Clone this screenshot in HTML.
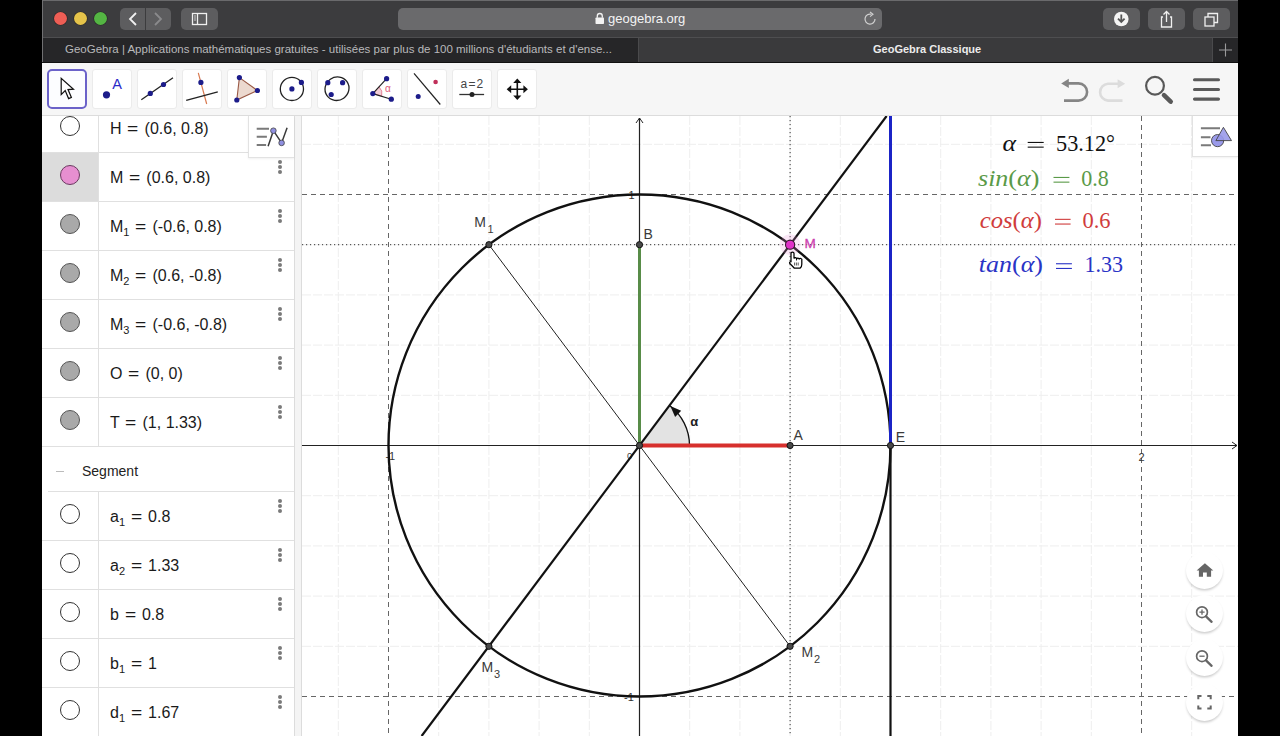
<!DOCTYPE html>
<html><head><meta charset="utf-8">
<style>
*{margin:0;padding:0;box-sizing:border-box}
html,body{width:1280px;height:736px;overflow:hidden;background:#000;font-family:"Liberation Sans",sans-serif}
#win{position:absolute;left:42px;top:0;width:1196px;height:736px;background:#fff;overflow:hidden}
#title{position:absolute;left:0;top:0;width:1196px;height:37px;background:#3c3c3e;border-top:1px solid #6a6a6c}
.tl{position:absolute;top:11px;width:13px;height:13px;border-radius:50%;box-shadow:0 0 0 0.6px rgba(0,0,0,.35)}
.btn{position:absolute;top:7px;height:22px;background:#5d5d5f;border-radius:5px}
.btn svg{position:absolute;left:0;top:0}
#tabs{position:absolute;left:0;top:37px;width:1196px;height:26px;background:#262628;border-top:1px solid #4e4e50;border-bottom:1px solid #111}
#toolbar{position:absolute;left:0;top:63px;width:1196px;height:53px;background:#f6f6f6;border-bottom:1px solid #dcdcdc}
.tool{position:absolute;top:6px;width:40px;height:40px;background:#fff;border:1px solid #ebebeb;border-radius:3px}
.tool.sel{border:2px solid #6b62c9;border-radius:5px;background:#fcfdff}
.tool svg{position:absolute;left:-1px;top:-1px}
.tool.sel svg{left:-2px;top:-2px}
#alg{position:absolute;left:0;top:116px;width:253px;height:620px;background:#fff;overflow:hidden}
.row{position:absolute;left:0;width:253px;height:49px;border-bottom:1px solid #e0e0e0}
.row .lc{position:absolute;left:0;top:0;width:57px;height:48px;border-right:1px solid #e0e0e0}
.dot{position:absolute;left:18px;top:11.5px;width:20px;height:20px;border-radius:50%;border:1.5px solid #333;background:#fff}
.dot.g{background:#a9a9a9;border-color:#555}
.dot.pk{background:#e68fd0;border-color:#6a3a60}
.row .tx{position:absolute;left:68px;top:14.5px;font-size:16px;color:#1a1a1a;white-space:nowrap;line-height:20px}
.row .mn{position:absolute;left:236px;top:7px;width:4px}
.mn i{display:block;width:4px;height:4px;border-radius:50%;background:#7a7a7a;margin-bottom:1px}
.q{display:inline-block;margin:0 2.4px;transform:scaleX(1.2)}
sub{font-size:11px;vertical-align:-4px;line-height:0}
#split{position:absolute;left:252px;top:116px;width:8px;height:620px;background:#f4f4f4;border-left:1px solid #dcdcdc;border-right:1px solid #dcdcdc}
#gfx{position:absolute;left:0;top:0}
.fab{position:absolute;left:1185px;width:37px;height:37px;border-radius:50%;background:#fff;box-shadow:0 2px 2.5px -0.5px rgba(0,0,0,.2)}
.fab svg{position:absolute;left:0;top:0}
.tabtxt{position:absolute;top:4px;font-size:11.5px;color:#b9b9bb;white-space:nowrap;line-height:14px}
</style></head><body>
<div id="win">
 <div id="title">
  <div class="tl" style="left:12px;background:#ee5e55"></div>
  <div class="tl" style="left:32px;background:#e5c34a"></div>
  <div class="tl" style="left:52px;background:#54b543"></div>
  <div class="btn" style="left:78px;width:25px;border-radius:5px 0 0 5px"><svg width="25" height="22"><path d="M16,5 L10,11 L16,17" fill="none" stroke="#f0f0f0" stroke-width="1.8"/></svg></div>
  <div class="btn" style="left:104px;width:25px;border-radius:0 5px 5px 0"><svg width="25" height="22"><path d="M9,5 L15,11 L9,17" fill="none" stroke="#8a8a8c" stroke-width="1.8"/></svg></div>
  <div class="btn" style="left:139px;width:37px"><svg width="37" height="22"><rect x="11.5" y="5.5" width="14" height="11" fill="none" stroke="#f0f0f0" stroke-width="1.3"/><line x1="16.5" y1="5.5" x2="16.5" y2="16.5" stroke="#f0f0f0" stroke-width="1.3"/><path d="M13,8 H15 M13,10 H15 M13,12 H15" stroke="#ddd" stroke-width="0.9"/></svg></div>
  <div class="btn" style="left:356px;width:484px;background:#6a6a6c"><svg width="484" height="22"><rect x="197.5" y="9.5" width="8.5" height="6.5" rx="0.8" fill="#f2f2f2"/><path d="M199.3,9.8 V8 A2.5,2.5 0 0 1 204.3,8 V9.8" fill="none" stroke="#f2f2f2" stroke-width="1.3"/><path d="M477,11 A5,5 0 1 1 473.5,6.3" fill="none" stroke="#d0d0d0" stroke-width="1.2"/><path d="M472,4 L475,6.3 L472,8.6" fill="none" stroke="#d0d0d0" stroke-width="1.1"/></svg><div style="position:absolute;left:210px;top:3px;font-size:13px;color:#f4f4f4;line-height:16px">geogebra.org</div></div>
  <div class="btn" style="left:1061px;width:37px"><svg width="37" height="22"><circle cx="18.3" cy="11" r="7.3" fill="#f4f4f4"/><path d="M18.3,6.5 V13.5 M15,10.7 L18.3,14 L21.6,10.7" fill="none" stroke="#555" stroke-width="1.8"/></svg></div>
  <div class="btn" style="left:1106px;width:37px"><svg width="37" height="22"><path d="M15,9 H13.5 V19 H23.5 V9 H22" fill="none" stroke="#f0f0f0" stroke-width="1.3"/><path d="M18.5,14 V3.5 M15.5,6.5 L18.5,3.5 L21.5,6.5" fill="none" stroke="#f0f0f0" stroke-width="1.3"/></svg></div>
  <div class="btn" style="left:1151px;width:37px"><svg width="37" height="22"><rect x="12" y="9" width="9" height="9" fill="none" stroke="#f0f0f0" stroke-width="1.3"/><path d="M15,9 V5.5 H24.5 V14.5 H21" fill="none" stroke="#f0f0f0" stroke-width="1.3"/></svg></div>
 </div>
 <div id="tabs"><div style="position:absolute;left:0;top:-38px;width:1px;height:62px;background:#707072"></div>
  <div style="position:absolute;left:596px;top:0;width:1px;height:24px;background:#4a4a4c"></div>
  <div style="position:absolute;left:597px;top:0;width:574px;height:24px;background:#3a3a3c"></div>
  <div style="position:absolute;left:1170px;top:0;width:1px;height:24px;background:#4a4a4c"></div>
  <div class="tabtxt" style="left:23px">GeoGebra | Applications mathématiques gratuites - utilisées par plus de 100 millions d'étudiants et d'ense...</div>
  <div class="tabtxt" style="left:831px;color:#ececec;font-weight:bold;font-size:11px">GeoGebra Classique</div>
  <svg style="position:absolute;left:1171px;top:0" width="25" height="24"><path d="M12.5,5.5 V18.5 M6,12 H19" stroke="#9a9a9c" stroke-width="1.1"/></svg>
 </div>
 <div id="toolbar">
<div class="tool sel" style="left:5px"><svg width="40" height="40" viewBox="0 0 40 40"><path d="M14.2,9.3 L14.2,25.6 L18.2,21.6 L21.6,29.6 L24.4,28.4 L21,20.6 L26.5,20.2 Z" fill="#fff" stroke="#111" stroke-width="1.2" stroke-linejoin="miter"/></svg></div>
<div class="tool" style="left:50px"><svg width="40" height="40" viewBox="0 0 40 40"><circle cx="14.5" cy="25.8" r="3.6" fill="#1c1c8a"/><text x="20.2" y="19.9" font-family="Liberation Sans" font-size="14.5" fill="#2a2ac8">A</text></svg></div>
<div class="tool" style="left:95px"><svg width="40" height="40" viewBox="0 0 40 40"><line x1="4.3" y1="30.8" x2="36" y2="8.8" stroke="#222" stroke-width="1.3"/><circle cx="13.3" cy="24.4" r="2.6" fill="#1c1c8a"/><circle cx="26.5" cy="15.5" r="2.6" fill="#1c1c8a"/></svg></div>
<div class="tool" style="left:140px"><svg width="40" height="40" viewBox="0 0 40 40"><line x1="16.3" y1="3.9" x2="24.7" y2="35" stroke="#d97a50" stroke-width="1.2"/><line x1="4.2" y1="31.3" x2="35.8" y2="22.8" stroke="#222" stroke-width="1.3"/><circle cx="18.9" cy="13.4" r="2.6" fill="#1c1c8a"/></svg></div>
<div class="tool" style="left:185px"><svg width="40" height="40" viewBox="0 0 40 40"><path d="M12.4,8.6 L30.4,21.5 L9.8,31 Z" fill="#ecd9cf" stroke="#9a5a46" stroke-width="1.1"/><circle cx="12.4" cy="8.6" r="2.6" fill="#1c1c8a"/><circle cx="30.4" cy="21.5" r="2.6" fill="#1c1c8a"/><circle cx="9.8" cy="31" r="2.6" fill="#1c1c8a"/></svg></div>
<div class="tool" style="left:230px"><svg width="40" height="40" viewBox="0 0 40 40"><circle cx="19.9" cy="19.9" r="11.6" fill="none" stroke="#222" stroke-width="1.3"/><circle cx="19.9" cy="19.9" r="2.6" fill="#1c1c8a"/><circle cx="29.4" cy="13.4" r="2.6" fill="#1c1c8a"/></svg></div>
<div class="tool" style="left:275px"><svg width="40" height="40" viewBox="0 0 40 40"><ellipse cx="20" cy="19.7" rx="12.2" ry="11.6" transform="rotate(-35 20 19.7)" fill="none" stroke="#222" stroke-width="1.3"/><circle cx="10.8" cy="13.7" r="2.6" fill="#1c1c8a"/><circle cx="25.6" cy="13.7" r="2.6" fill="#1c1c8a"/><circle cx="14.2" cy="25.5" r="2.6" fill="#1c1c8a"/></svg></div>
<div class="tool" style="left:320px"><svg width="40" height="40" viewBox="0 0 40 40"><path d="M10.8,24.6 L17,17.9 A9,9 0 0 1 19.7,27 Z" fill="#f3cfd6" stroke="#e0708a" stroke-width="0.8"/><line x1="10.8" y1="24.6" x2="24.6" y2="9.7" stroke="#222" stroke-width="1.2"/><line x1="10.8" y1="24.6" x2="29.3" y2="30.2" stroke="#222" stroke-width="1.2"/><circle cx="10.8" cy="24.6" r="2.6" fill="#1c1c8a"/><circle cx="24.6" cy="9.7" r="2.6" fill="#1c1c8a"/><circle cx="29.3" cy="30.2" r="2.6" fill="#1c1c8a"/><text x="23" y="23" font-family="Liberation Sans" font-size="10" fill="#e05a78">α</text></svg></div>
<div class="tool" style="left:365px"><svg width="40" height="40" viewBox="0 0 40 40"><line x1="7" y1="4.4" x2="33.3" y2="35.5" stroke="#222" stroke-width="1.2"/><circle cx="28.6" cy="13" r="2.3" fill="#c0305a"/><circle cx="11.2" cy="27.6" r="2.5" fill="#1c1c8a"/></svg></div>
<div class="tool" style="left:410px"><svg width="40" height="40" viewBox="0 0 40 40"><text x="8.6" y="18.6" font-family="Liberation Sans" font-size="12" fill="#444">a</text><text x="16.4" y="18.6" font-family="Liberation Sans" font-size="12" fill="#444">=</text><text x="24.6" y="18.6" font-family="Liberation Sans" font-size="12" fill="#444">2</text><line x1="7.3" y1="25.5" x2="32.1" y2="25.5" stroke="#333" stroke-width="1.3"/><circle cx="20" cy="25.5" r="2.5" fill="#222"/></svg></div>
<div class="tool" style="left:455px"><svg width="40" height="40" viewBox="0 0 40 40"><path d="M20.3,12 V28.4 M12,20.2 H28.6" stroke="#111" stroke-width="1.6"/><path d="M20.3,9.5 L16.2,14 H24.4 Z M20.3,31 L16.2,26.4 H24.4 Z M9.7,20.2 L14.2,16.2 V24.2 Z M30.9,20.2 L26.4,16.2 V24.2 Z" fill="#111"/></svg></div>
  <svg style="position:absolute;left:1000px;top:0" width="196" height="52">
   <path d="M26,20.4 H36.5 A8.6,8.6 0 0 1 36.5,37.6 H22" fill="none" stroke="#858585" stroke-width="2.6"/>
   <path d="M19.2,20.4 L26.8,15.8 V25 Z" fill="#858585"/>
   <path d="M76.3,20.75 H65.9 A8.45,8.45 0 0 0 65.9,37.6 H80.5" fill="none" stroke="#dcdcdc" stroke-width="2.6"/>
   <path d="M83.2,20.75 L75.6,16.2 V25.3 Z" fill="#dcdcdc"/>
   <circle cx="113" cy="22.8" r="8.9" fill="none" stroke="#585858" stroke-width="2.2"/>
   <path d="M122,32.2 L128.7,38.6" stroke="#585858" stroke-width="4.6" stroke-linecap="round"/>
   <path d="M152.5,16.7 H176.5 M152.5,26.5 H176.5 M152.5,36.1 H176.5" stroke="#5a5a5a" stroke-width="3.1" stroke-linecap="round"/>
  </svg>
 </div>
</div>
<svg id="gfx" width="1280" height="736" viewBox="0 0 1280 736">
<defs><clipPath id="gc"><rect x="302" y="116" width="936" height="620"/></clipPath></defs>
<g clip-path="url(#gc)">
<line x1="338.3" y1="116" x2="338.3" y2="736" stroke="#eeeeee" stroke-width="1" stroke-dasharray="9,2"/>
<line x1="438.7" y1="116" x2="438.7" y2="736" stroke="#eeeeee" stroke-width="1" stroke-dasharray="9,2"/>
<line x1="488.9" y1="116" x2="488.9" y2="736" stroke="#eeeeee" stroke-width="1" stroke-dasharray="9,2"/>
<line x1="539.1" y1="116" x2="539.1" y2="736" stroke="#eeeeee" stroke-width="1" stroke-dasharray="9,2"/>
<line x1="589.3" y1="116" x2="589.3" y2="736" stroke="#eeeeee" stroke-width="1" stroke-dasharray="9,2"/>
<line x1="689.7" y1="116" x2="689.7" y2="736" stroke="#eeeeee" stroke-width="1" stroke-dasharray="9,2"/>
<line x1="739.9" y1="116" x2="739.9" y2="736" stroke="#eeeeee" stroke-width="1" stroke-dasharray="9,2"/>
<line x1="790.1" y1="116" x2="790.1" y2="736" stroke="#eeeeee" stroke-width="1" stroke-dasharray="9,2"/>
<line x1="840.3" y1="116" x2="840.3" y2="736" stroke="#eeeeee" stroke-width="1" stroke-dasharray="9,2"/>
<line x1="940.7" y1="116" x2="940.7" y2="736" stroke="#eeeeee" stroke-width="1" stroke-dasharray="9,2"/>
<line x1="990.9" y1="116" x2="990.9" y2="736" stroke="#eeeeee" stroke-width="1" stroke-dasharray="9,2"/>
<line x1="1041.1" y1="116" x2="1041.1" y2="736" stroke="#eeeeee" stroke-width="1" stroke-dasharray="9,2"/>
<line x1="1091.3" y1="116" x2="1091.3" y2="736" stroke="#eeeeee" stroke-width="1" stroke-dasharray="9,2"/>
<line x1="1191.7" y1="116" x2="1191.7" y2="736" stroke="#eeeeee" stroke-width="1" stroke-dasharray="9,2"/>
<line x1="302" y1="144.3" x2="1238" y2="144.3" stroke="#eeeeee" stroke-width="1" stroke-dasharray="9,2"/>
<line x1="302" y1="244.7" x2="1238" y2="244.7" stroke="#eeeeee" stroke-width="1" stroke-dasharray="9,2"/>
<line x1="302" y1="294.9" x2="1238" y2="294.9" stroke="#eeeeee" stroke-width="1" stroke-dasharray="9,2"/>
<line x1="302" y1="345.1" x2="1238" y2="345.1" stroke="#eeeeee" stroke-width="1" stroke-dasharray="9,2"/>
<line x1="302" y1="395.3" x2="1238" y2="395.3" stroke="#eeeeee" stroke-width="1" stroke-dasharray="9,2"/>
<line x1="302" y1="495.7" x2="1238" y2="495.7" stroke="#eeeeee" stroke-width="1" stroke-dasharray="9,2"/>
<line x1="302" y1="545.9" x2="1238" y2="545.9" stroke="#eeeeee" stroke-width="1" stroke-dasharray="9,2"/>
<line x1="302" y1="596.1" x2="1238" y2="596.1" stroke="#eeeeee" stroke-width="1" stroke-dasharray="9,2"/>
<line x1="302" y1="646.3" x2="1238" y2="646.3" stroke="#eeeeee" stroke-width="1" stroke-dasharray="9,2"/>
<line x1="388.5" y1="116" x2="388.5" y2="736" stroke="#666" stroke-width="1" stroke-dasharray="5,4"/>
<line x1="890.5" y1="116" x2="890.5" y2="736" stroke="#666" stroke-width="1" stroke-dasharray="5,4"/>
<line x1="1141.5" y1="116" x2="1141.5" y2="736" stroke="#666" stroke-width="1" stroke-dasharray="5,4"/>
<line x1="302" y1="194.5" x2="1238" y2="194.5" stroke="#666" stroke-width="1" stroke-dasharray="5,4"/>
<line x1="302" y1="696.5" x2="1238" y2="696.5" stroke="#666" stroke-width="1" stroke-dasharray="5,4"/>
<line x1="302" y1="244.7" x2="1238" y2="244.7" stroke="#333" stroke-width="1" stroke-dasharray="1.2,2.8"/>
<line x1="790.1" y1="116" x2="790.1" y2="736" stroke="#333" stroke-width="1" stroke-dasharray="1.2,2.8"/>
<line x1="302" y1="445.5" x2="1237" y2="445.5" stroke="#222" stroke-width="1.2"/>
<path d="M1232,442.0 L1237,445.5 L1232,449.0" fill="none" stroke="#222" stroke-width="1"/>
<line x1="639.5" y1="736" x2="639.5" y2="118" stroke="#222" stroke-width="1.2"/>
<path d="M636.0,123 L639.5,118 L643.0,123" fill="none" stroke="#222" stroke-width="1"/>
<text x="390.3" y="459.7" font-family="Liberation Sans" font-size="11" fill="#333" text-anchor="middle">-1</text>
<text x="627.0" y="459.0" font-family="Liberation Sans" font-size="9.5" fill="#444">0</text>
<text x="1141.5" y="460.5" font-family="Liberation Sans" font-size="11" fill="#333" text-anchor="middle">2</text>
<text x="628.5" y="198.5" font-family="Liberation Sans" font-size="11" fill="#333">1</text>
<text x="624.0" y="700.5" font-family="Liberation Sans" font-size="11" fill="#333">-1</text>
<path d="M639.5,445.5 L689.5,445.5 A50,50 0 0 0 669.5,405.5 Z" fill="#e3e3e3" stroke="none"/>
<path d="M689.5,445.5 A50,50 0 0 0 669.5,405.5" fill="none" stroke="#111" stroke-width="1.3"/>
<path d="M670.3,406.1 L681.2,410.7 L675.1,416.9 Z" fill="#111"/>
<text x="690.3" y="425.5" font-family="Liberation Sans" font-size="13" font-weight="bold" fill="#222">α</text>
<circle cx="639.5" cy="445.5" r="251.0" fill="none" stroke="#111" stroke-width="2.4"/>
<line x1="488.9" y1="244.7" x2="790.1" y2="646.3" stroke="#222" stroke-width="1"/>
<line x1="421.6" y1="736" x2="886.6" y2="116" stroke="#111" stroke-width="2.2"/>
<line x1="890.5" y1="445.5" x2="890.5" y2="736" stroke="#111" stroke-width="2.2"/>
<line x1="890.5" y1="445.5" x2="890.5" y2="116" stroke="#1b24c6" stroke-width="3"/>
<line x1="639.5" y1="445.5" x2="639.5" y2="244.7" stroke="#588c48" stroke-width="3"/>
<line x1="639.5" y1="445.5" x2="790.1" y2="445.5" stroke="#d7302d" stroke-width="4"/>
<circle cx="639.5" cy="445.5" r="3.1" fill="#4a4a4a" stroke="#111" stroke-width="1"/>
<circle cx="790.1" cy="445.5" r="3.1" fill="#4a4a4a" stroke="#111" stroke-width="1"/>
<circle cx="890.5" cy="445.5" r="3.1" fill="#4a4a4a" stroke="#111" stroke-width="1"/>
<circle cx="639.5" cy="244.7" r="3.1" fill="#4a4a4a" stroke="#111" stroke-width="1"/>
<circle cx="488.9" cy="244.7" r="3.1" fill="#4a4a4a" stroke="#111" stroke-width="1"/>
<circle cx="790.1" cy="646.3" r="3.1" fill="#4a4a4a" stroke="#111" stroke-width="1"/>
<circle cx="488.9" cy="646.3" r="3.1" fill="#4a4a4a" stroke="#111" stroke-width="1"/>
<circle cx="790.1" cy="244.7" r="10.5" fill="#e890d8" fill-opacity="0.22"/>
<circle cx="790.1" cy="244.7" r="4.6" fill="#e030c8" stroke="#3a1030" stroke-width="1.1"/>
<text x="643.6" y="239" font-family="Liberation Sans" font-size="14" fill="#3a3a3a">B</text>
<text x="793.6" y="440" font-family="Liberation Sans" font-size="14" fill="#3a3a3a">A</text>
<text x="895.7" y="442" font-family="Liberation Sans" font-size="14" fill="#3a3a3a">E</text>
<text x="474.3" y="227" font-family="Liberation Sans" font-size="14" fill="#3a3a3a">M</text><text x="487.5" y="232.8" font-family="Liberation Sans" font-size="11" fill="#3a3a3a">1</text>
<text x="801.5" y="657" font-family="Liberation Sans" font-size="14" fill="#3a3a3a">M</text><text x="814" y="663" font-family="Liberation Sans" font-size="11" fill="#3a3a3a">2</text>
<text x="481.5" y="672" font-family="Liberation Sans" font-size="14" fill="#3a3a3a">M</text><text x="494" y="677.6" font-family="Liberation Sans" font-size="11" fill="#3a3a3a">3</text>
<text x="804.5" y="247.5" font-family="Liberation Sans" font-size="13.5" fill="#cc3fb0" stroke="#cc3fb0" stroke-width="0.3">M</text>
<g transform="translate(786,251)"><path d="M5,9.5 V2.6 A1.5,1.5 0 0 1 8,2.6 V7.6 A1.35,1.35 0 0 1 10.6,7.9 A1.35,1.35 0 0 1 13.2,8.4 A1.35,1.35 0 0 1 15.8,9.2 V13.2 Q15.8,15.6 14.2,17 H8.2 L3.6,12.2 A1.3,1.3 0 0 1 5,10.6 Z" fill="#fff" stroke="#000" stroke-width="1.25"/><path d="M10.4,11.5 V14.5 M12.2,11.5 V14.5 M8.6,11.5 V14.5" stroke="#111" stroke-width="0.7"/></g>
<text x="1002.5" y="150.6" font-family="Liberation Serif" font-size="22.5" fill="#111" textLength="13.5" lengthAdjust="spacingAndGlyphs"><tspan font-style="italic">α</tspan></text>
<rect x="1027.7" y="141.9" width="16.0" height="1.1" fill="#111"/><rect x="1027.7" y="146.6" width="16.0" height="1.1" fill="#111"/>
<text x="1056" y="150.6" font-family="Liberation Serif" font-size="22.5" fill="#111" textLength="59" lengthAdjust="spacingAndGlyphs">53.12°</text>
<text x="978" y="185.6" font-family="Liberation Serif" font-size="22.5" fill="#5a9a48" textLength="61.4" lengthAdjust="spacingAndGlyphs"><tspan font-style="italic">sin</tspan>(<tspan font-style="italic">α</tspan>)</text>
<rect x="1053.5" y="176.9" width="15.9" height="1.1" fill="#5a9a48"/><rect x="1053.5" y="181.6" width="15.9" height="1.1" fill="#5a9a48"/>
<text x="1081.25" y="185.6" font-family="Liberation Serif" font-size="22.5" fill="#5a9a48" textLength="27.5" lengthAdjust="spacingAndGlyphs">0.8</text>
<text x="979.75" y="227.5" font-family="Liberation Serif" font-size="22.5" fill="#d03c3c" textLength="62.1" lengthAdjust="spacingAndGlyphs"><tspan font-style="italic">cos</tspan>(<tspan font-style="italic">α</tspan>)</text>
<rect x="1055" y="218.8" width="15.6" height="1.1" fill="#d03c3c"/><rect x="1055" y="223.5" width="15.6" height="1.1" fill="#d03c3c"/>
<text x="1082.5" y="227.5" font-family="Liberation Serif" font-size="22.5" fill="#d03c3c" textLength="28.1" lengthAdjust="spacingAndGlyphs">0.6</text>
<text x="978.75" y="271.9" font-family="Liberation Serif" font-size="22.5" fill="#2a34c6" textLength="64.2" lengthAdjust="spacingAndGlyphs"><tspan font-style="italic">tan</tspan>(<tspan font-style="italic">α</tspan>)</text>
<rect x="1056" y="263.2" width="15.9" height="1.1" fill="#2a34c6"/><rect x="1056" y="267.9" width="15.9" height="1.1" fill="#2a34c6"/>
<text x="1084.4" y="271.9" font-family="Liberation Serif" font-size="22.5" fill="#2a34c6" textLength="38.6" lengthAdjust="spacingAndGlyphs">1.33</text>
</g>
</svg>
<div style="position:absolute;left:42px;top:0;width:260px;height:736px;pointer-events:none">
 <div id="alg">
<div class="row" style="top:-12px"><div class="lc" style=""><div class="dot"></div></div><div class="tx">H <span class="q">=</span> (0.6, 0.8)</div></div>
<div class="row" style="top:37px"><div class="lc" style="background:#dcdcdc;"><div class="dot pk"></div></div><div class="tx">M <span class="q">=</span> (0.6, 0.8)</div><div class="mn"><i></i><i></i><i></i></div></div>
<div class="row" style="top:86px"><div class="lc" style=""><div class="dot g"></div></div><div class="tx">M<sub>1</sub> <span class="q">=</span> (-0.6, 0.8)</div><div class="mn"><i></i><i></i><i></i></div></div>
<div class="row" style="top:135px"><div class="lc" style=""><div class="dot g"></div></div><div class="tx">M<sub>2</sub> <span class="q">=</span> (0.6, -0.8)</div><div class="mn"><i></i><i></i><i></i></div></div>
<div class="row" style="top:184px"><div class="lc" style=""><div class="dot g"></div></div><div class="tx">M<sub>3</sub> <span class="q">=</span> (-0.6, -0.8)</div><div class="mn"><i></i><i></i><i></i></div></div>
<div class="row" style="top:233px"><div class="lc" style=""><div class="dot g"></div></div><div class="tx">O <span class="q">=</span> (0, 0)</div><div class="mn"><i></i><i></i><i></i></div></div>
<div class="row" style="top:282px"><div class="lc" style=""><div class="dot g"></div></div><div class="tx">T <span class="q">=</span> (1, 1.33)</div><div class="mn"><i></i><i></i><i></i></div></div>
<div class="row" style="top:376px"><div class="lc" style=""><div class="dot"></div></div><div class="tx">a<sub>1</sub> <span class="q">=</span> 0.8</div><div class="mn"><i></i><i></i><i></i></div></div>
<div class="row" style="top:425px"><div class="lc" style=""><div class="dot"></div></div><div class="tx">a<sub>2</sub> <span class="q">=</span> 1.33</div><div class="mn"><i></i><i></i><i></i></div></div>
<div class="row" style="top:474px"><div class="lc" style=""><div class="dot"></div></div><div class="tx">b <span class="q">=</span> 0.8</div><div class="mn"><i></i><i></i><i></i></div></div>
<div class="row" style="top:523px"><div class="lc" style=""><div class="dot"></div></div><div class="tx">b<sub>1</sub> <span class="q">=</span> 1</div><div class="mn"><i></i><i></i><i></i></div></div>
<div class="row" style="top:572px"><div class="lc" style=""><div class="dot"></div></div><div class="tx">d<sub>1</sub> <span class="q">=</span> 1.67</div><div class="mn"><i></i><i></i><i></i></div></div>
<div style="position:absolute;left:0;top:331px;width:253px;height:45px;background:#fff"><div style="position:absolute;left:6px;top:44px;width:247px;height:1px;background:#e0e0e0"></div><div style="position:absolute;left:14px;top:23.5px;width:8px;height:1.5px;background:#bbb"></div><div style="position:absolute;left:40px;top:16px;font-size:14px;color:#222">Segment</div></div>
 </div>
 <div id="split"></div>
 <div style="position:absolute;left:206px;top:116px;width:46px;height:42px;background:#fff;border-left:1px solid #e2e2e2;border-bottom:1px solid #e2e2e2;box-shadow:0 1px 2px rgba(0,0,0,.06)">
  <svg style="position:absolute;left:-1px;top:0" width="46" height="42"><path d="M8.7,12.7 H21 M8.7,20.8 H18.9 M8.7,29 H18.1" stroke="#7a7a7a" stroke-width="2"/><path d="M20.1,30.2 L25.4,14.7 L33.6,26.9 L39.1,11.8" fill="none" stroke="#3a3a3a" stroke-width="1.5"/><circle cx="25.4" cy="14.7" r="2.8" fill="#8f8fe0" stroke="#444" stroke-width="0.8"/><circle cx="33.6" cy="26.9" r="2.8" fill="#8f8fe0" stroke="#444" stroke-width="0.8"/></svg>
 </div>
</div>
<div style="position:absolute;left:1192px;top:116px;width:46px;height:41px;background:#fff;border-left:1px solid #e2e2e2;border-bottom:1px solid #e2e2e2;box-shadow:0 1px 2px rgba(0,0,0,.06)">
 <svg style="position:absolute;left:-1px;top:0" width="46" height="41"><path d="M8.9,12.3 H28 M8.9,21.2 H18.5 M8.9,29.3 H19" stroke="#7a7a7a" stroke-width="2"/><circle cx="25.6" cy="24.6" r="6.1" fill="#9a9aea" stroke="#444" stroke-width="0.9"/><path d="M31.4,11.3 L23.9,24.6 H39.5 Z" fill="#9a9aea" fill-opacity="0.9" stroke="#444" stroke-width="0.9"/></svg>
</div>
<div class="fab" style="left:1185.5px;top:551.5px"><svg width="37" height="37"><path d="M18.9,11.2 L10.6,18.4 H12.9 V24.8 H17 V20.6 H20.8 V24.8 H25.1 V18.4 H27.3 Z" fill="#666"/></svg></div>
<div class="fab" style="left:1185.5px;top:594.5px"><svg width="37" height="37"><circle cx="16" cy="17.2" r="5.4" fill="none" stroke="#666" stroke-width="1.7"/><path d="M20,21.4 L25.6,26.8" stroke="#666" stroke-width="2.3" stroke-linecap="round"/><path d="M16,14.6 V19.8 M13.4,17.2 H18.6" stroke="#666" stroke-width="1.3"/></svg></div>
<div class="fab" style="left:1185.5px;top:638.5px"><svg width="37" height="37"><circle cx="16" cy="17.2" r="5.4" fill="none" stroke="#666" stroke-width="1.7"/><path d="M20,21.4 L25.6,26.8" stroke="#666" stroke-width="2.3" stroke-linecap="round"/><path d="M13.4,17.2 H18.6" stroke="#666" stroke-width="1.3"/></svg></div>
<div class="fab" style="left:1185.5px;top:683.5px"><svg width="37" height="37"><path d="M12.3,15.2 V12 H15.5 M21.3,12 H24.7 V15.2 M24.7,21.5 V24.5 H21.3 M15.5,24.5 H12.3 V21.5" fill="none" stroke="#666" stroke-width="2"/></svg></div>
<div style="position:absolute;left:0;top:0;width:42px;height:736px;background:#000"></div>
<div style="position:absolute;left:1238px;top:0;width:42px;height:736px;background:#000"></div>
</body></html>
